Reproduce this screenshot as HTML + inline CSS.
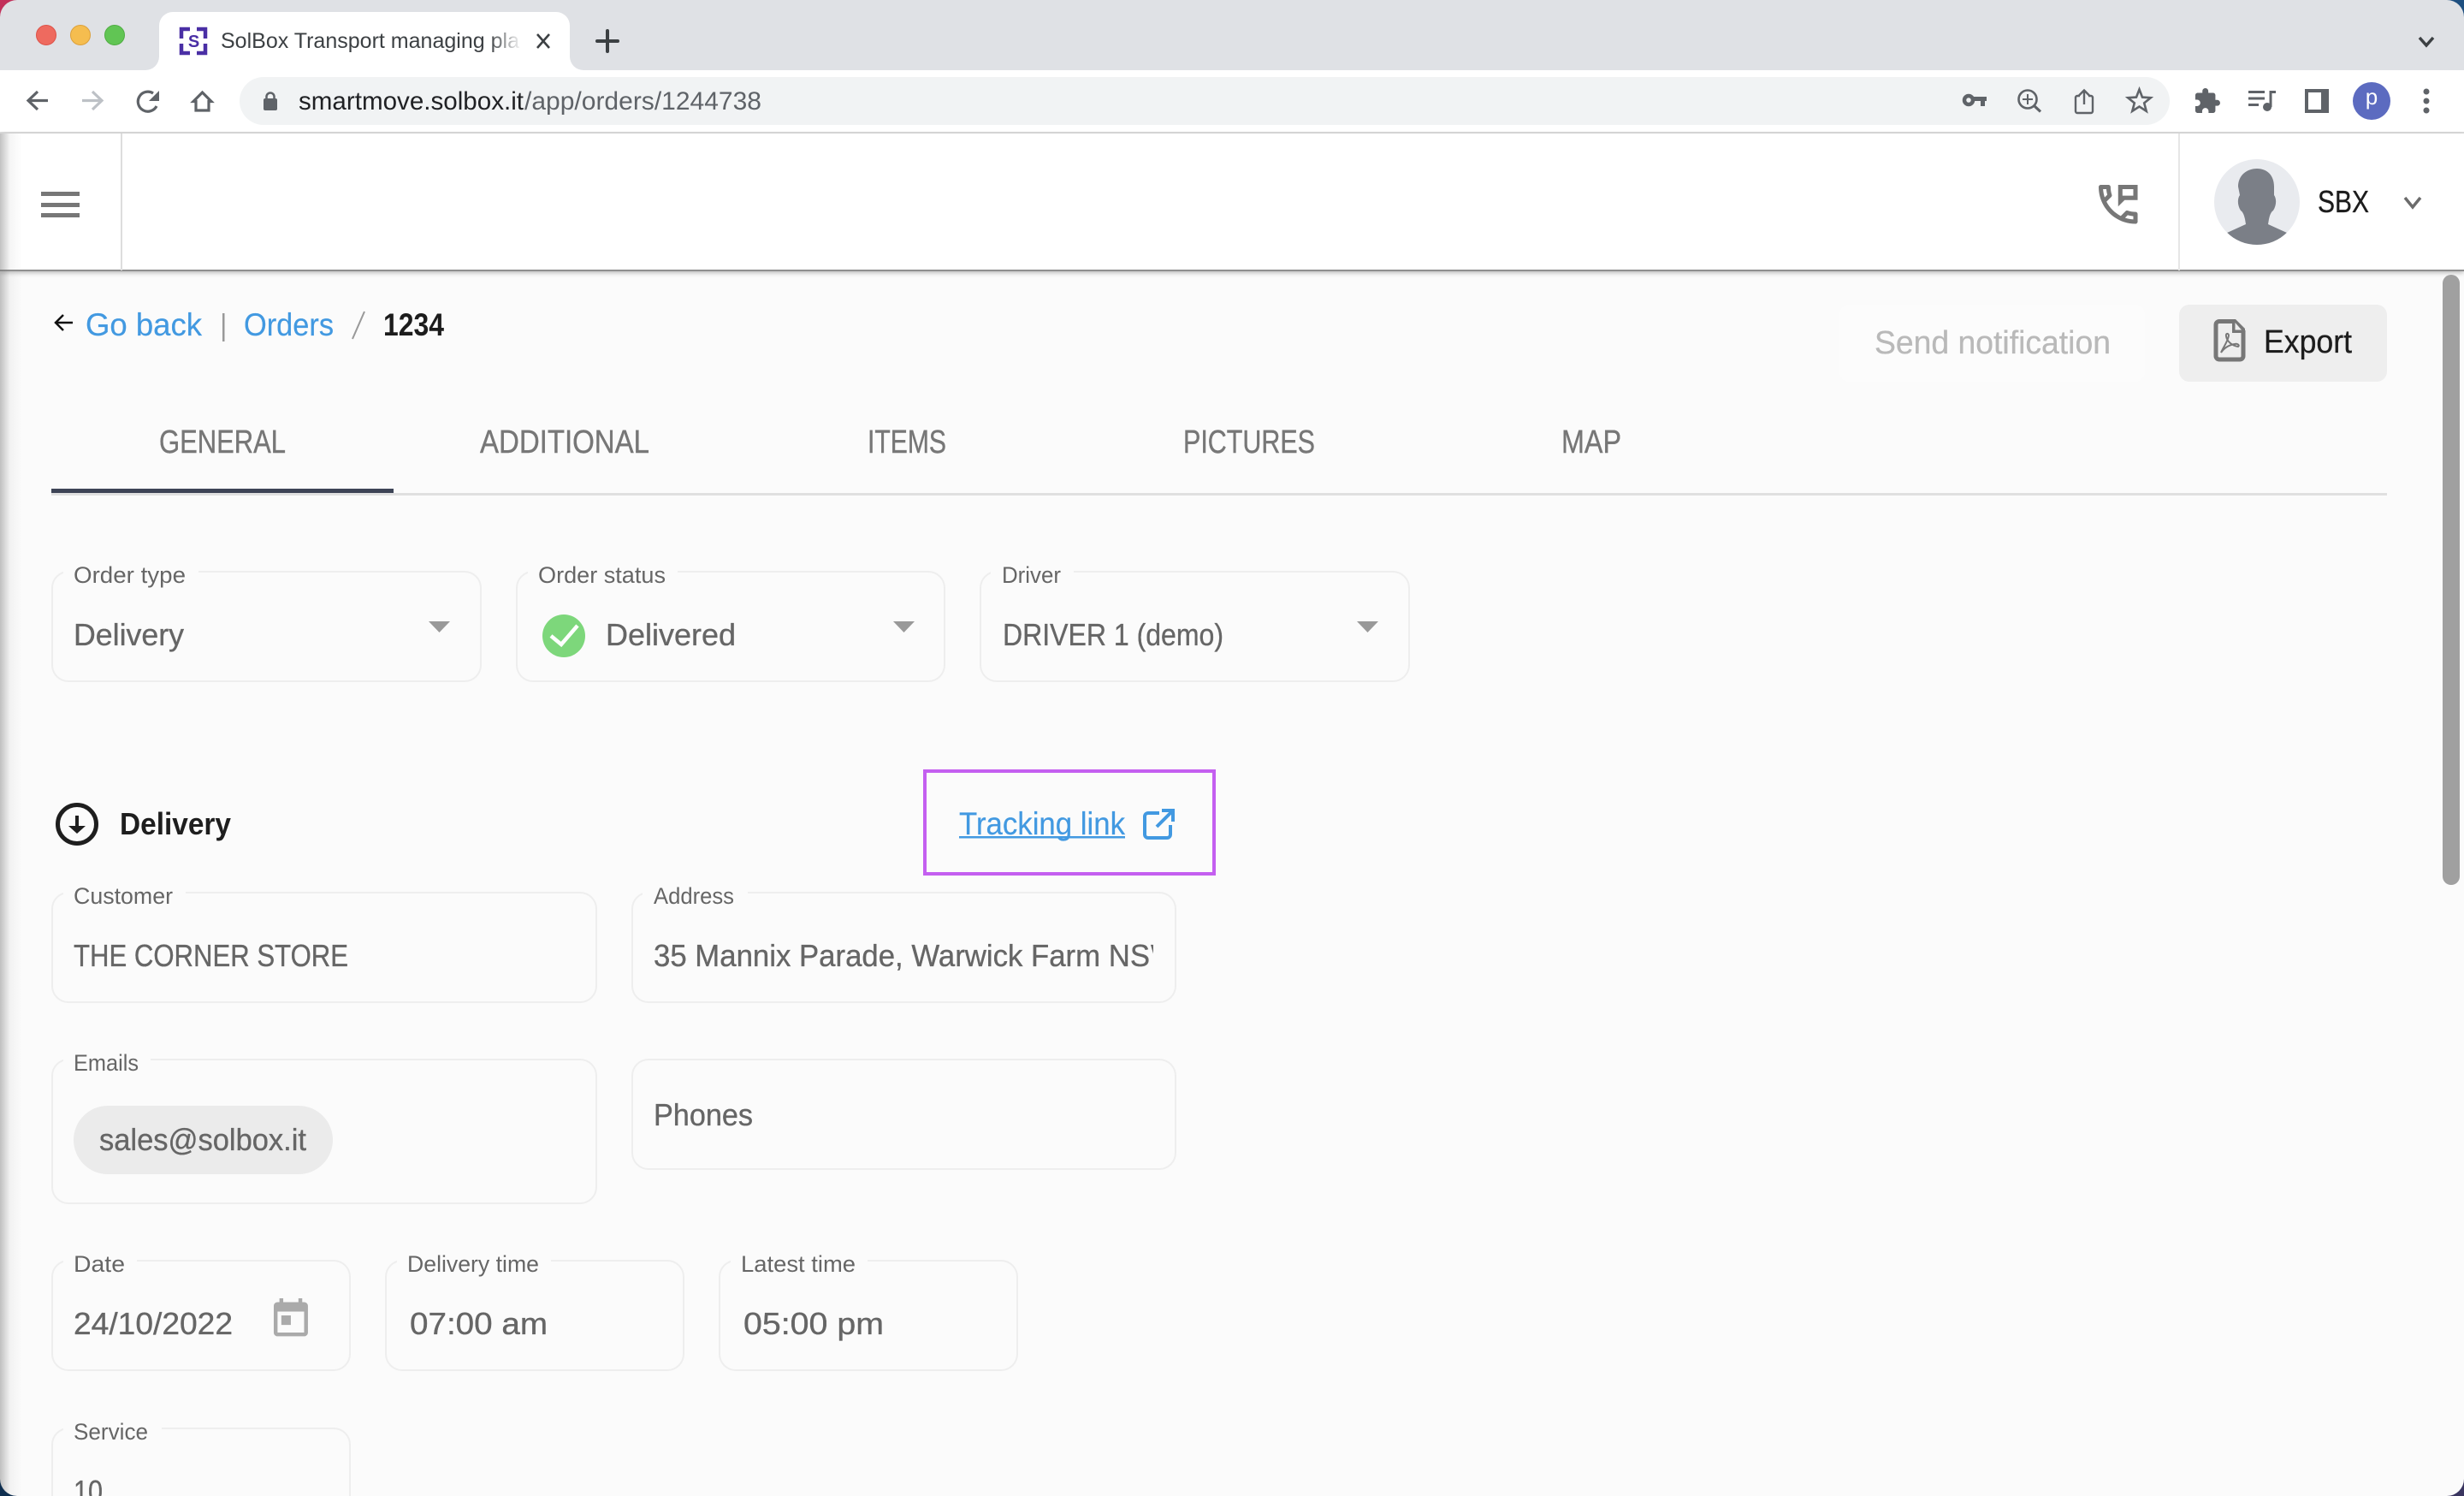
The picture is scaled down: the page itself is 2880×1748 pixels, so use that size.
<!DOCTYPE html>
<html lang="en">
<head>
<meta charset="utf-8">
<title>SolBox Transport managing platform</title>
<style>
html,body{margin:0;padding:0;width:2880px;height:1748px;overflow:hidden;background:#fbfbfb}
body{position:relative;font-family:"Liberation Sans",sans-serif}
.a{position:absolute;box-sizing:border-box}
#strip{left:0;top:0;width:2880px;height:82px;background:#dfe1e5}
#bar{left:0;top:82px;width:2880px;height:74px;background:#fff;border-bottom:2px solid #dcdcdc}
#omni{left:280px;top:90px;width:2256px;height:56px;border-radius:28px;background:#f1f3f4}
#head{left:0;top:156px;width:2880px;height:161px;background:#fff;border-bottom:2px solid #8f8f8f;box-shadow:0 2px 5px rgba(0,0,0,.25)}
#v1{left:141px;top:156px;width:2px;height:160px;background:#ddd}
#v2{left:2546px;top:156px;width:2px;height:160px;background:#e6e6e6}
#shade{left:0;top:156px;width:26px;height:1592px;background:linear-gradient(90deg,rgba(120,120,120,.45),rgba(160,160,160,.1) 45%,rgba(200,200,200,0))}
.ham{left:48px;width:45px;height:5px;background:#777}
#send{left:2150px;top:356px;width:357px;height:90px;background:#fcfcfc;border-radius:12px}
#exp{left:2547px;top:356px;width:243px;height:90px;background:#eee;border-radius:12px}
#sb{left:2855px;top:321px;width:20px;height:713px;background:#a0a0a0;border-radius:10px}
#tabline{left:60px;top:576px;width:2730px;height:3px;background:#e0e0e0}
#tabact{left:60px;top:571px;width:400px;height:5px;background:#3d4456}
.b{border:2px solid #eee;border-radius:20px}
.g{position:absolute;top:-3px;height:6px;background:#fbfbfb}
#track{left:1079px;top:899px;width:342px;height:124px;border:4px solid #c45ff0}
#chip{left:86px;top:1292px;width:303px;height:80px;border-radius:40px;background:#ebebeb}
svg{position:absolute;left:0;top:0}
text{font-family:"Liberation Sans",sans-serif}
.l{font-size:27px;fill:#666}
.v{font-size:36px;fill:#666;stroke:#666;stroke-width:.35}
.t{font-size:38px;fill:#777;stroke:#777;stroke-width:.4}
.n{font-size:37px;fill:#4299e1;stroke:#4299e1;stroke-width:.2}
.d{fill:none;stroke:#5f6368;stroke-width:3.2}
</style>
</head>
<body>
<div class="a" id="strip"></div>
<div class="a" id="bar"></div>
<div class="a" id="omni"></div>
<div class="a" id="head"></div>
<div class="a" id="v1"></div>
<div class="a" id="v2"></div>
<div class="a ham" style="top:224px"></div>
<div class="a ham" style="top:237px"></div>
<div class="a ham" style="top:249px"></div>
<div class="a" id="send"></div>
<div class="a" id="exp"></div>
<div class="a" id="sb"></div>
<div class="a" id="tabline"></div>
<div class="a" id="tabact"></div>

<div class="a b" style="left:60px;top:667px;width:503px;height:130px"><span class="g" style="left:12px;width:158px"></span></div>
<div class="a b" style="left:603px;top:667px;width:502px;height:130px"><span class="g" style="left:12px;width:175px"></span></div>
<div class="a b" style="left:1145px;top:667px;width:503px;height:130px"><span class="g" style="left:11px;width:97px"></span></div>
<div class="a b" style="left:60px;top:1042px;width:638px;height:130px"><span class="g" style="left:12px;width:143px"></span></div>
<div class="a b" style="left:738px;top:1042px;width:637px;height:130px"><span class="g" style="left:11px;width:123px"></span></div>
<div class="a b" style="left:60px;top:1237px;width:638px;height:170px"><span class="g" style="left:12px;width:102px"></span></div>
<div class="a b" style="left:738px;top:1237px;width:637px;height:130px"></div>
<div class="a b" style="left:60px;top:1472px;width:350px;height:130px"><span class="g" style="left:12px;width:86px"></span></div>
<div class="a b" style="left:450px;top:1472px;width:350px;height:130px"><span class="g" style="left:12px;width:180px"></span></div>
<div class="a b" style="left:840px;top:1472px;width:350px;height:130px"><span class="g" style="left:12px;width:160px"></span></div>
<div class="a b" style="left:60px;top:1668px;width:350px;height:130px"><span class="g" style="left:12px;width:115px"></span></div>
<div class="a" id="track"></div>
<div class="a" id="chip"></div>
<div class="a" id="shade"></div>

<svg width="2880" height="1748" viewBox="0 0 2880 1748" xmlns="http://www.w3.org/2000/svg">
<defs>
<linearGradient id="fade" x1="0" x2="1" y1="0" y2="0"><stop offset="0" stop-color="#fff" stop-opacity="0"/><stop offset="1" stop-color="#fff"/></linearGradient>
<clipPath id="addr"><rect x="760" y="1080" width="588" height="70"/></clipPath>
<clipPath id="pic"><circle cx="2638" cy="236" r="50"/></clipPath>
</defs>

<!-- window corners -->
<path d="M0 0H20A20 20 0 0 0 0 20Z" fill="#c2305a"/>
<path d="M2880 0H2860A20 20 0 0 1 2880 20Z" fill="#1d4f80"/>
<path d="M0 1748H20A20 20 0 0 1 0 1728Z" fill="#0f2f50"/>
<path d="M2880 1748H2860A20 20 0 0 0 2880 1728Z" fill="#3a3560"/>

<!-- traffic lights -->
<circle cx="54" cy="41" r="11.5" fill="#ee6a5f" stroke="#dd5248" stroke-width="1"/>
<circle cx="94" cy="41" r="11.5" fill="#f5bd4f" stroke="#dca03a" stroke-width="1"/>
<circle cx="134" cy="41" r="11.5" fill="#61c554" stroke="#50ad43" stroke-width="1"/>

<!-- tab -->
<path d="M170 82A16 16 0 0 0 186 66V30A16 16 0 0 1 202 14H650A16 16 0 0 1 666 30V66A16 16 0 0 0 682 82Z" fill="#fff"/>
<path d="M222 34H212V45M230 34H240V45M212 51V62H222M240 51V62H230" fill="none" stroke="#4a2fa5" stroke-width="4.5"/>
<text x="226.5" y="55" font-size="20" font-weight="bold" fill="#4a2fa5" text-anchor="middle">S</text>
<text x="258" y="56" font-size="25" fill="#3c4043" textLength="349" lengthAdjust="spacingAndGlyphs">SolBox Transport managing pla</text>
<rect x="572" y="30" width="38" height="36" fill="url(#fade)"/>
<path d="M628 40L642 56M642 40L628 56" stroke="#3c4043" stroke-width="2.6" fill="none"/>
<path d="M710 36V60M698 48H722" stroke="#3c4043" stroke-width="4" stroke-linecap="round" fill="none"/>
<path d="M2828 44L2836 53L2844 44" stroke="#3c4043" stroke-width="3.5" fill="none"/>

<!-- nav -->
<path class="d" d="M56 117.5H34M44 107L33 117.5L44 128"/>
<path d="M96 117.5H118M108 107L119 117.5L108 128" fill="none" stroke="#bdc1c6" stroke-width="3.2"/>
<path class="d" d="M183 124A11.5 11.5 0 1 1 179 109"/>
<path d="M186 106V118H174Z" fill="#5f6368"/>
<path class="d" d="M236.5 108L247 118.5H244V129H229V118.5H226Z"/>
<path d="M308 117a2 2 0 0 1 2-2h12a2 2 0 0 1 2 2v10a2 2 0 0 1-2 2h-12a2 2 0 0 1-2-2z" fill="#5f6368"/>
<path d="M311.5 115.5V113a4.5 4.5 0 0 1 9 0v2.5" fill="none" stroke="#5f6368" stroke-width="2.5"/>
<text x="349" y="128" font-size="30" fill="#202124" textLength="263" lengthAdjust="spacingAndGlyphs">smartmove.solbox.it</text>
<text x="613" y="128" font-size="30" fill="#5f6368" textLength="277" lengthAdjust="spacingAndGlyphs">/app/orders/1244738</text>

<!-- omnibox icons -->
<circle cx="2301" cy="117" r="5" fill="none" stroke="#5f6368" stroke-width="4.5"/>
<path d="M2307 113H2322V118H2320V124H2315V118H2307Z" fill="#5f6368"/>
<circle cx="2370" cy="116" r="10.5" fill="none" stroke="#5f6368" stroke-width="2.6"/>
<path d="M2377.5 123.5L2385 130.5" stroke="#5f6368" stroke-width="3.2"/>
<path d="M2370 110V122M2364 116H2376" stroke="#5f6368" stroke-width="2"/>
<path d="M2431 112H2428a2 2 0 0 0-2 2V130a2 2 0 0 0 2 2H2444a2 2 0 0 0 2-2V114a2 2 0 0 0-2-2H2441" fill="none" stroke="#5f6368" stroke-width="2.4"/>
<path d="M2436 122V106M2430 111.5L2436 105.5L2442 111.5" fill="none" stroke="#5f6368" stroke-width="2.4"/>
<polygon points="2500.5,104.5 2504,113.6 2513.8,114.2 2506.2,120.4 2508.7,129.8 2500.5,124.5 2492.3,129.8 2494.8,120.4 2487.2,114.2 2497,113.6" fill="none" stroke="#5f6368" stroke-width="2.6"/>

<!-- toolbar right -->
<path transform="translate(2563.2 101.6) scale(1.38)" fill="#5f6368" d="M20.5 11H19V7c0-1.1-.9-2-2-2h-4V3.5C13 2.12 11.88 1 10.5 1S8 2.12 8 3.5V5H4c-1.1 0-1.99.9-1.99 2v3.8H3.5c1.49 0 2.7 1.21 2.7 2.7s-1.21 2.7-2.7 2.7H2V20c0 1.1.9 2 2 2h3.8v-1.5c0-1.49 1.21-2.7 2.7-2.7 1.49 0 2.7 1.21 2.7 2.7V22H17c1.1 0 2-.9 2-2v-4h1.5c1.38 0 2.5-1.12 2.5-2.5S21.88 11 20.5 11z"/>
<path d="M2628 107.5H2647M2628 115H2647M2628 122.5H2640" stroke="#5f6368" stroke-width="3" fill="none"/>
<circle cx="2650" cy="125" r="5" fill="#5f6368"/>
<path d="M2654 125V107.5H2660" stroke="#5f6368" stroke-width="3" fill="none"/>
<rect x="2694" y="104" width="28" height="28" fill="#5f6368"/>
<rect x="2698" y="108" width="15" height="20" fill="#fff"/>
<circle cx="2772" cy="118" r="22" fill="#5c6bc0"/>
<text x="2772" y="122" font-size="26" fill="#fff" text-anchor="middle">p</text>
<circle cx="2836" cy="107" r="3.5" fill="#5f6368"/>
<circle cx="2836" cy="118" r="3.5" fill="#5f6368"/>
<circle cx="2836" cy="129" r="3.5" fill="#5f6368"/>

<!-- app header -->
<path transform="translate(2445.4 208.4) scale(2.53)" fill="#777" d="M20 15.5c-1.25 0-2.45-.2-3.57-.57-.1-.03-.21-.05-.31-.05-.26 0-.51.1-.71.29l-2.2 2.2c-2.83-1.44-5.15-3.75-6.59-6.59l2.2-2.2c.28-.28.36-.67.25-1.02C8.7 6.45 8.5 5.25 8.5 4c0-.55-.45-1-1-1H4c-.55 0-1 .45-1 1 0 9.39 7.61 17 17 17 .55 0 1-.45 1-1v-3.5c0-.55-.45-1-1-1zM5.03 5h1.5c.07.88.22 1.75.45 2.58l-1.2 1.21c-.4-1.21-.66-2.47-.75-3.79zM19 18.97c-1.32-.09-2.6-.35-3.8-.76l1.2-1.2c.85.24 1.72.39 2.6.45v1.51zM12 3v10l3-3h6V3h-9zm7 5h-5V5h5v3z"/>
<circle cx="2638" cy="236" r="50" fill="#e9ebef"/>
<path clip-path="url(#pic)" fill="#7b7f87" d="M2638 197C2650 197 2658 205 2658 218L2658 228C2661 232 2661 240 2657 246C2654 248 2653 252 2652 256L2651 262L2673 272V286H2603V272L2625 262L2624 256C2623 252 2622 248 2619 246C2615 240 2615 232 2618 228L2616 218C2616 205 2626 197 2638 197Z"/>
<text x="2709" y="248" font-size="36" fill="#1c1c1c" stroke="#1c1c1c" stroke-width=".3" textLength="60" lengthAdjust="spacingAndGlyphs">SBX</text>
<path d="M2811 231L2820 242L2829 231" fill="none" stroke="#6b6b6b" stroke-width="3.5"/>

<!-- breadcrumb -->
<path d="M85 377H66M74 368L65 377L74 386" fill="none" stroke="#111" stroke-width="2.5"/>
<text class="n" x="100" y="392" textLength="136" lengthAdjust="spacingAndGlyphs">Go back</text>
<rect x="260" y="366" width="2.5" height="33" fill="#999"/>
<text class="n" x="285" y="392" textLength="105" lengthAdjust="spacingAndGlyphs">Orders</text>
<path d="M426 364L412 396" stroke="#999" stroke-width="2"/>
<text x="448" y="392" font-size="37" font-weight="bold" fill="#1c1c1c" textLength="71" lengthAdjust="spacingAndGlyphs">1234</text>

<!-- actions -->
<text x="2191" y="413" font-size="38" fill="#b9b9b9" stroke="#b9b9b9" stroke-width=".3" textLength="276" lengthAdjust="spacingAndGlyphs">Send notification</text>
<path d="M2611 375.5H2594a4 4 0 0 0-4 4V416a4 4 0 0 0 4 4H2618a4 4 0 0 0 4-4V386" fill="none" stroke="#777" stroke-width="5"/>
<path d="M2609 373H2613L2624 384V389H2609Z" fill="#777"/>
<path d="M2612.5 377V385.5H2620Z" fill="#eee"/>
<path d="M2596 412C2599 405 2604 399 2605 392C2605 389 2601 389 2602 393C2603 399 2609 404 2616 405C2618 404 2616 401 2612 402C2606 403 2600 406 2596 412Z" fill="none" stroke="#777" stroke-width="2"/>
<text x="2646" y="412" font-size="38" fill="#1d1d1d" stroke="#1d1d1d" stroke-width=".3" textLength="103" lengthAdjust="spacingAndGlyphs">Export</text>

<!-- tabs -->
<text class="t" x="186" y="529" textLength="148" lengthAdjust="spacingAndGlyphs">GENERAL</text>
<text class="t" x="561" y="529" textLength="198" lengthAdjust="spacingAndGlyphs">ADDITIONAL</text>
<text class="t" x="1014" y="529" textLength="92" lengthAdjust="spacingAndGlyphs">ITEMS</text>
<text class="t" x="1383" y="529" textLength="154" lengthAdjust="spacingAndGlyphs">PICTURES</text>
<text class="t" x="1825" y="529" textLength="70" lengthAdjust="spacingAndGlyphs">MAP</text>

<!-- top selects -->
<text class="l" x="86" y="681" textLength="131" lengthAdjust="spacingAndGlyphs">Order type</text>
<text class="v" x="86" y="754" textLength="129" lengthAdjust="spacingAndGlyphs">Delivery</text>
<polygon points="501,726 526,726 513.5,739" fill="#999"/>
<text class="l" x="629" y="681" textLength="149" lengthAdjust="spacingAndGlyphs">Order status</text>
<circle cx="659" cy="743" r="25" fill="#7dd77b"/>
<path d="M644 743L656 753L675 731" fill="none" stroke="#fff" stroke-width="4.5"/>
<text class="v" x="708" y="754" textLength="152" lengthAdjust="spacingAndGlyphs">Delivered</text>
<polygon points="1044,726 1069,726 1056.5,739" fill="#999"/>
<text class="l" x="1171" y="681" textLength="69" lengthAdjust="spacingAndGlyphs">Driver</text>
<text class="v" x="1172" y="754" textLength="258" lengthAdjust="spacingAndGlyphs">DRIVER 1 (demo)</text>
<polygon points="1586,726 1611,726 1598.5,739" fill="#999"/>

<!-- delivery heading -->
<circle cx="90" cy="963" r="22.5" fill="none" stroke="#1e1e1e" stroke-width="5"/>
<path d="M90 953V968" stroke="#1e1e1e" stroke-width="4"/>
<polygon points="80,965 100,965 90,974" fill="#1e1e1e"/>
<text x="140" y="975" font-size="36" font-weight="bold" fill="#1e1e1e" textLength="130" lengthAdjust="spacingAndGlyphs">Delivery</text>

<!-- tracking link -->
<text class="n" x="1121" y="975" textLength="194" lengthAdjust="spacingAndGlyphs">Tracking link</text>
<rect x="1121" y="977" width="194" height="2.5" fill="#4299e1"/>
<path d="M1355 950H1342a4 4 0 0 0-4 4V975a4 4 0 0 0 4 4H1364a4 4 0 0 0 4-4V964" fill="none" stroke="#4299e1" stroke-width="4"/>
<path d="M1352 966L1370 948M1358 947H1371V960" fill="none" stroke="#4299e1" stroke-width="4"/>

<!-- fields -->
<text class="l" x="86" y="1056" textLength="116" lengthAdjust="spacingAndGlyphs">Customer</text>
<text class="v" x="86" y="1129" textLength="321" lengthAdjust="spacingAndGlyphs">THE CORNER STORE</text>
<text class="l" x="764" y="1056" textLength="94" lengthAdjust="spacingAndGlyphs">Address</text>
<g clip-path="url(#addr)">
<text class="v" x="764" y="1129" textLength="580" lengthAdjust="spacingAndGlyphs">35 Mannix Parade, Warwick Farm NS</text>
<text class="v" x="1345" y="1129">W</text>
</g>
<text class="l" x="86" y="1251" textLength="76" lengthAdjust="spacingAndGlyphs">Emails</text>
<text class="v" x="116" y="1344" textLength="242" lengthAdjust="spacingAndGlyphs">sales@solbox.it</text>
<text class="v" x="764" y="1315" textLength="116" lengthAdjust="spacingAndGlyphs">Phones</text>
<text class="l" x="86" y="1486" textLength="60" lengthAdjust="spacingAndGlyphs">Date</text>
<text class="v" x="86" y="1559" textLength="186" lengthAdjust="spacingAndGlyphs">24/10/2022</text>
<path transform="translate(313.3 1514.8) scale(2.22)" fill="#aaa" d="M16 1v2H8V1H6v2H5c-1.11 0-1.99.9-1.99 2L3 19c0 1.1.89 2 2 2h14c1.1 0 2-.9 2-2V5c0-1.1-.9-2-2-2h-1V1h-2zm3 18H5V8h14v11zM7 10h5v5H7z"/>
<text class="l" x="476" y="1486" textLength="154" lengthAdjust="spacingAndGlyphs">Delivery time</text>
<text class="v" x="479" y="1559" textLength="161" lengthAdjust="spacingAndGlyphs">07:00 am</text>
<text class="l" x="866" y="1486" textLength="134" lengthAdjust="spacingAndGlyphs">Latest time</text>
<text class="v" x="869" y="1559" textLength="164" lengthAdjust="spacingAndGlyphs">05:00 pm</text>
<text class="l" x="86" y="1682" textLength="87" lengthAdjust="spacingAndGlyphs">Service</text>
<text class="v" x="86" y="1755" textLength="34" lengthAdjust="spacingAndGlyphs">10</text>
</svg>
</body>
</html>
